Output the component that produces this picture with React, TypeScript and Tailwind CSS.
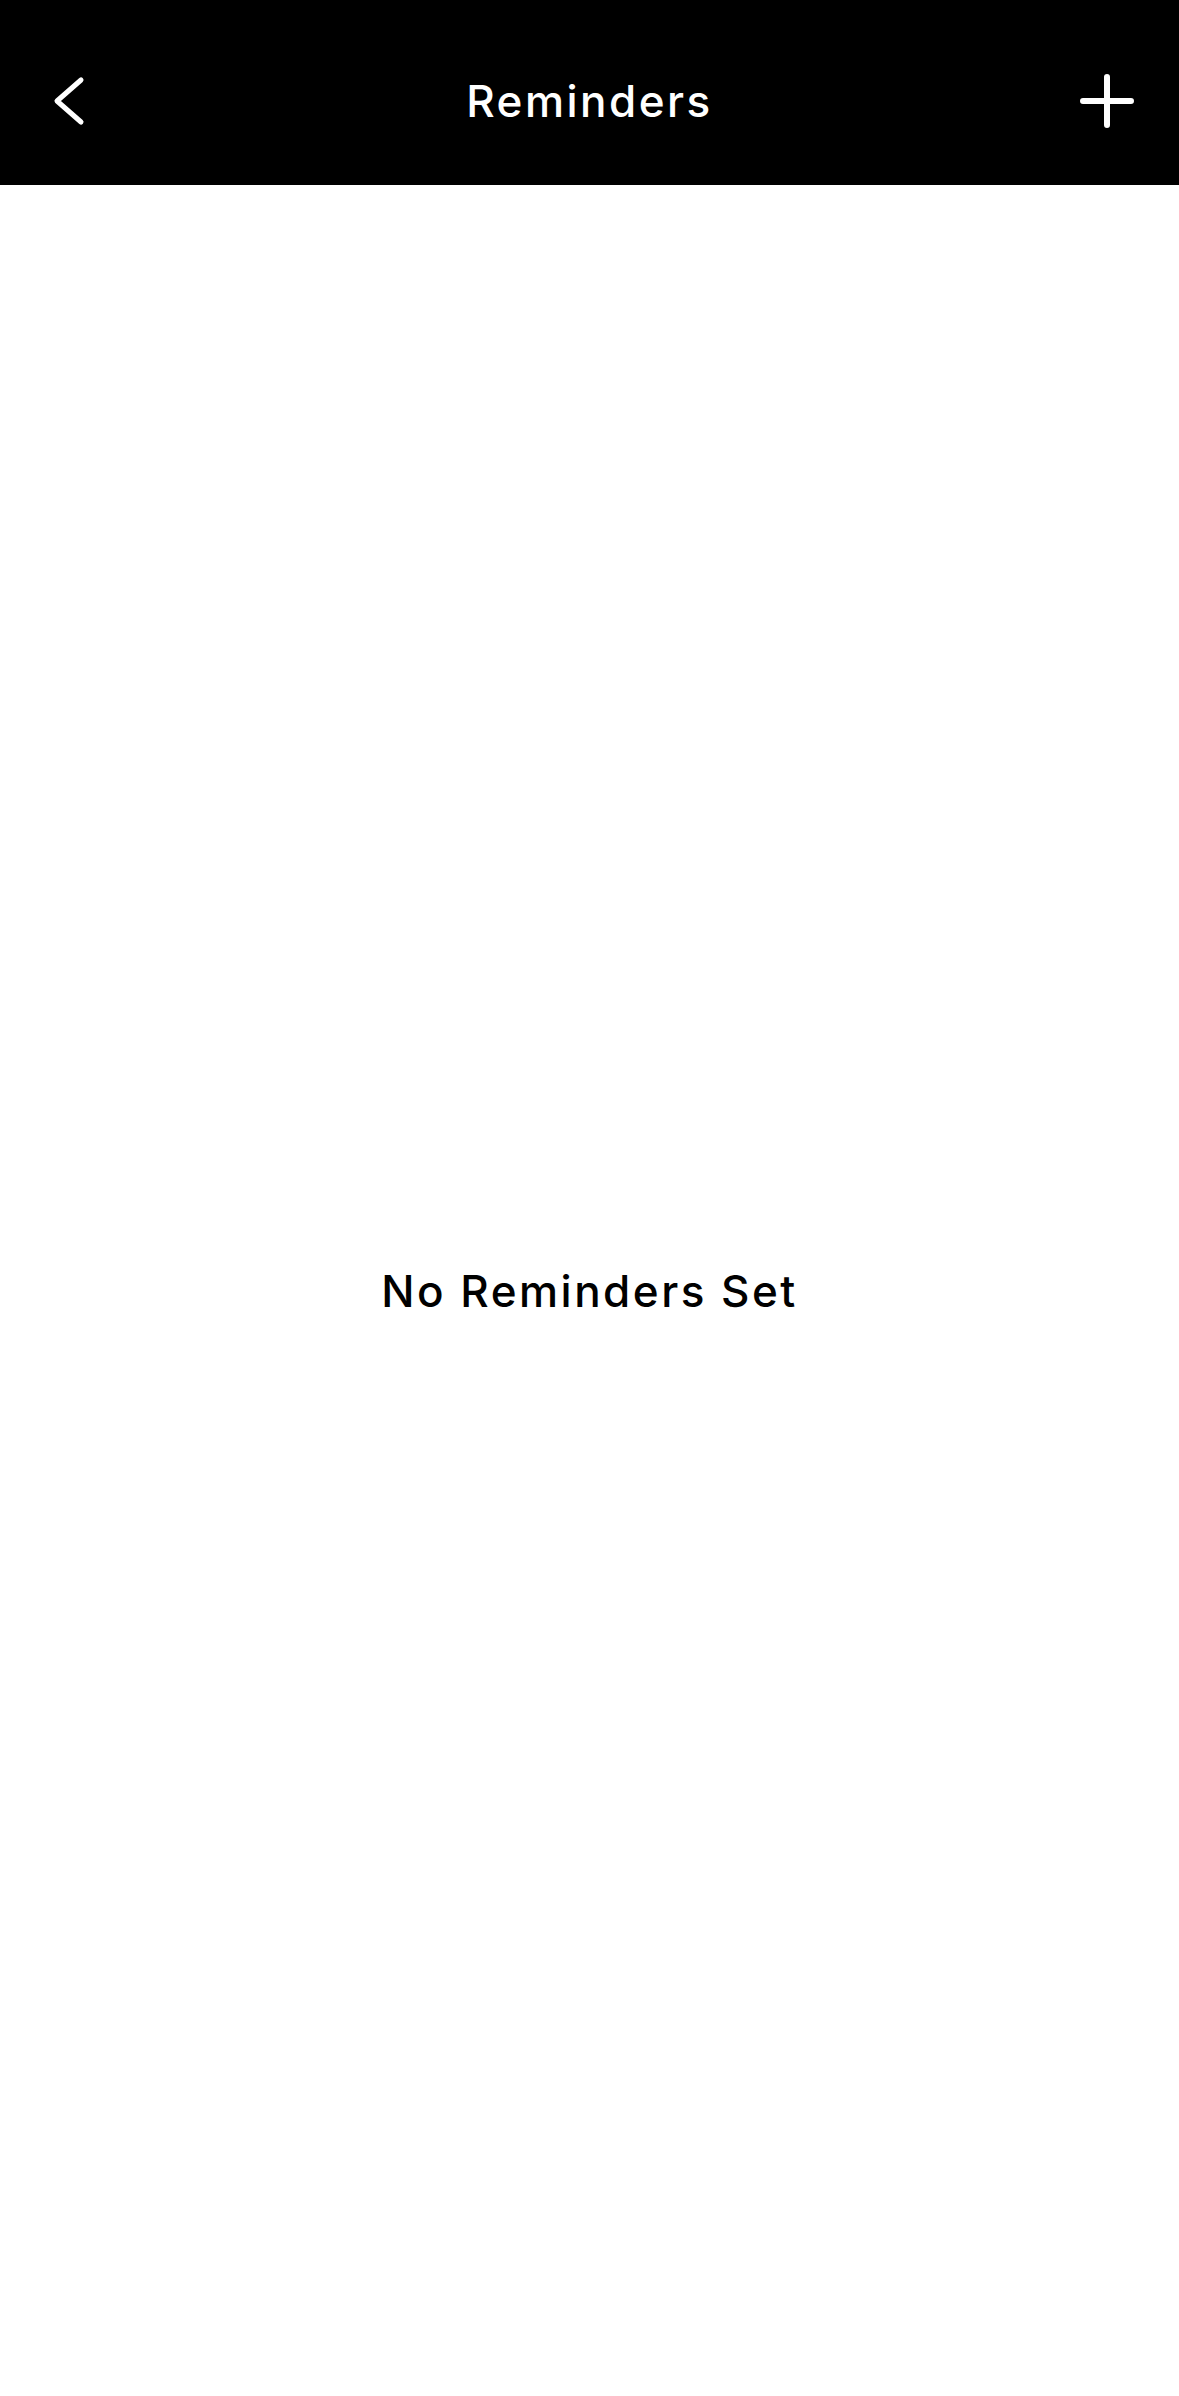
import React from "react";

export default function App() {
  return (
    <div className="h-screen w-full flex flex-col bg-white" style={{ fontFamily: 'Inter, "Liberation Sans", Arial, sans-serif' }}>
      <header className="bg-black h-[185px] pt-[16px] shrink-0">
        <div className="h-full grid grid-cols-[1fr_auto_1fr] items-center">
          <div className="flex items-center">
            <button className="ml-[52px] flex items-center" aria-label="Back">
              <svg width="34" height="50" viewBox="0 0 34 50" fill="none">
                <path d="M29 4 L5 25 L29 46" stroke="white" strokeWidth="5" strokeLinecap="round" strokeLinejoin="round" />
              </svg>
            </button>
          </div>
          <h1 className="text-white text-[44px] font-medium leading-none tracking-[2.5px] text-center">Reminders</h1>
          <div className="flex items-center justify-end">
            <button className="mr-[45px] flex items-center" aria-label="Add">
              <svg width="54" height="54" viewBox="0 0 54 54" fill="none">
                <path d="M27 3 V51 M3 27 H51" stroke="white" strokeWidth="6" strokeLinecap="round" />
              </svg>
            </button>
          </div>
        </div>
      </header>
      <main className="flex-1 flex items-center justify-center">
        <p className="text-black text-[44px] font-medium leading-none tracking-[2.5px]">No Reminders Set</p>
      </main>
    </div>
  );
}
